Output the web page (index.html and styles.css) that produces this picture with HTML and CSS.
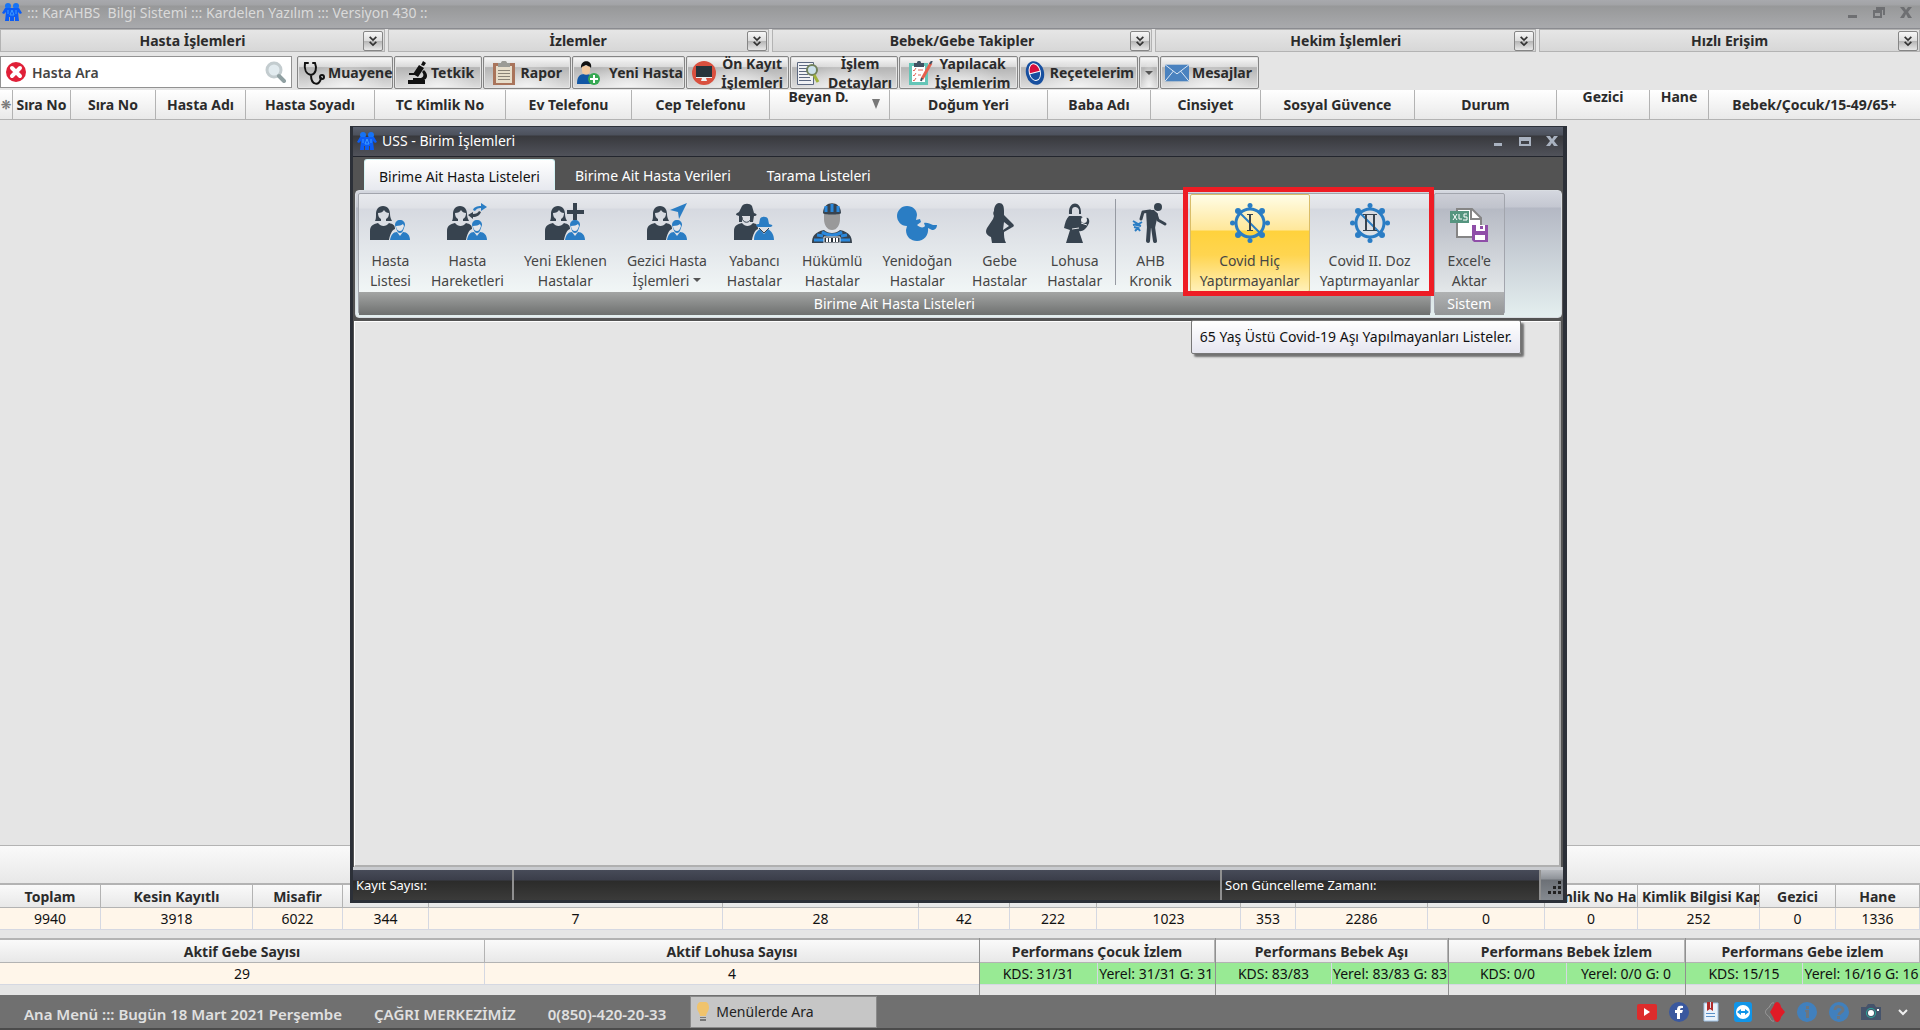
FILE: index.html
```html
<!DOCTYPE html>
<html lang="tr">
<head>
<meta charset="UTF-8">
<meta name="viewport" content="width=device-width, initial-scale=1.0">
<title>KarAHBS Bilgi Sistemi</title>
<link rel="stylesheet" href="styles.css">
</head>
<body>

<!-- shared icon shapes -->
<svg class="sprite" aria-hidden="true">
<symbol id="app" viewBox="0 0 20 18">
<g fill="#1673f5"><circle cx="6" cy="3" r="3"/><circle cx="14" cy="3" r="3"/></g>
<path fill="#0b5cf5" d="M3 5h14l3 5-2 1-2-2 1 9h-4v-4h-1v4H8v-4H7v4H3l1-9-2 2-2-1z"/>
<path fill="none" stroke="#3f9bff" d="M10 7l-2 5h4zM6 7v4M14 7v4"/>
</symbol>
<symbol id="woman" viewBox="0 0 40 40">
<path fill="#37434f" d="M13 3c-5 0-7 4-7 8 0 3 0 5-1 7h6v-2c-2-1-3-3-3-6 3 0 5-1 6-3 1 2 3 3 5 3 0 3-1 5-3 6v2h6c-1-2-2-4-2-7 0-4-2-8-7-8z"/>
<path fill="#37434f" d="M0 37v-9c0-5 3-7 8-8 3 4 8 4 11 0 4 1 6 2 6 6-3 1-5 5-6 11z"/>
</symbol>
<symbol id="boy" viewBox="0 0 40 40">
<path fill="#2a7dc4" d="M30 17c-3 0-5 2-5 5l1 3c1 3 2 5 4 5s3-2 4-5l1-3c0-3-2-5-5-5z"/>
<path fill="#e4e6ea" d="M26 23c3 0 6-1 7-2l1 2c-1 3-2 5-4 5s-4-2-4-5z"/>
<path fill="#2a7dc4" d="M20 37c1-5 3-8 7-8l3 4 3-4c4 0 7 3 7 8z"/>
</symbol>
<symbol id="virus" viewBox="0 0 40 40">
<g stroke="#2a7dc4" stroke-width="3" fill="none"><circle cx="20" cy="20" r="14"/><path stroke-width="2" d="M10 10l20 20M20 2v5M20 33v5M2 20h5M33 20h5M7 7l4 4M29 29l4 4M33 7l-4 4M7 33l4-4"/></g>
<g fill="#2a7dc4"><circle cx="20" cy="2.500" r="2.500"/><circle cx="20" cy="37.500" r="2.500"/><circle cx="2.500" cy="20" r="2.500"/><circle cx="37.500" cy="20" r="2.500"/><circle cx="8" cy="8" r="3"/><circle cx="32" cy="8" r="3"/><circle cx="8" cy="32" r="3"/><circle cx="32" cy="32" r="3"/></g>
</symbol>
<symbol id="chevrons" viewBox="0 0 12 14">
<path fill="none" stroke="#333" stroke-width="2" d="M2 2l4 4 4-4M2 8l4 4 4-4"/>
</symbol>
</svg>

<header class="titlebar">
<svg class="app-icon"><use href="#app"/></svg>
<h1>::: KarAHBS&nbsp; Bilgi Sistemi ::: Kardelen Yazılım ::: Versiyon 430 ::</h1>
<div class="win-buttons">
<button type="button" aria-label="Küçült"><svg viewBox="0 0 12 12"><path d="M2 9h9v3H2z"/></svg></button>
<button type="button" aria-label="Geri yükle"><svg viewBox="0 0 12 12"><path fill-rule="evenodd" d="M3 1h9v8h-2V4H3zM0 4h9v8H0zm2 3v3h5V7z"/></svg></button>
<button type="button" aria-label="Kapat"><svg viewBox="0 0 12 12"><path d="M0 1h4l2 3 2-3h4L8 6l4 6H8L6 8l-2 4H0l4-6z"/></svg></button>
</div>
</header>

<nav class="menus">
<div class="menu"><span>Hasta İşlemleri</span><button type="button" aria-label="Hasta İşlemleri aç"><svg><use href="#chevrons"/></svg></button></div>
<div class="menu"><span>İzlemler</span><button type="button" aria-label="İzlemler aç"><svg><use href="#chevrons"/></svg></button></div>
<div class="menu"><span>Bebek/Gebe Takipler</span><button type="button" aria-label="Bebek/Gebe Takipler aç"><svg><use href="#chevrons"/></svg></button></div>
<div class="menu"><span>Hekim İşlemleri</span><button type="button" aria-label="Hekim İşlemleri aç"><svg><use href="#chevrons"/></svg></button></div>
<div class="menu"><span>Hızlı Erişim</span><button type="button" aria-label="Hızlı Erişim aç"><svg><use href="#chevrons"/></svg></button></div>
</nav>

<div class="toolbar">
<div class="search">
<svg class="clear-icon" viewBox="0 0 22 22"><circle cx="11" cy="11" r="10" fill="#e02038"/><path d="M7 7l8 8M15 7l-8 8" stroke="#fff" stroke-width="4" stroke-linecap="round"/></svg>
<input type="text" placeholder="Hasta Ara" aria-label="Hasta Ara">
<svg class="find-icon" viewBox="0 0 22 22"><circle cx="9" cy="9" r="7" fill="#e2ebef" stroke="#c3cccf" stroke-width="3"/><path d="M14 15l5 5" stroke="#90a0a2" stroke-width="4" stroke-linecap="round"/></svg>
</div>

<button type="button" class="tool muayene">
<svg viewBox="0 0 24 24"><path fill="none" stroke="#111" stroke-width="2" stroke-linecap="round" d="M6 2H3c-1 6 1 11 6 12 5-1 6-7 4-12h-2M9 14c0 11 9 11 10 3"/><circle cx="20" cy="16" r="2" fill="none" stroke="#111" stroke-width="2"/></svg>
<span>Muayene</span></button>
<button type="button" class="tool tetkik">
<svg viewBox="0 0 24 24"><path fill="#111" d="M18 0l3 2-2 3-3-1zM14 4l5 3-6 9-5-3zM4 12h9v2H4zM3 19h5v-2h8c3-1 3-4 1-6l2-2c5 5 3 9 0 10h1v4H3z"/></svg>
<span>Tetkik</span></button>
<button type="button" class="tool rapor">
<svg viewBox="0 0 24 24"><path fill="#a9745b" d="M1 2h22v22H1z"/><path fill="#e7decb" d="M4 5h16v17H4z"/><path fill="#9b9b96" d="M6 2h3c0-3 6-3 6 0h3v4H6z"/><path stroke="#8a8378" d="M6 9.500h12M6 12.500h12M6 15.500h12M6 18.500h12"/></svg>
<span>Rapor</span></button>
<button type="button" class="tool yeni">
<svg viewBox="0 0 24 24"><path fill="#1257a5" d="M0 23c0-7 2-10 8-10s10 3 10 10z"/><path fill="#f1c9a0" d="M5 5h8v5c0 5-8 5-8 0z"/><path fill="#111" d="M4 7c-1-9 12-9 10 0-1-2-4-2-5-3-1 1-4 1-5 3z"/><circle cx="17" cy="18" r="6" fill="#35a852"/><path stroke="#fff" stroke-width="2" d="M17 14v8M13 18h8"/></svg>
<span>Yeni Hasta</span></button>
<button type="button" class="tool onkayit">
<svg viewBox="0 0 24 24"><circle cx="12" cy="12" r="12" fill="#d9503f"/><path fill="#26343c" d="M4 5h16v12H4z"/><path fill="#eef1f2" d="M4 16h16v1H4zM10 17h4l1 3H9z"/></svg>
<span>Ön Kayıt<br>İşlemleri</span></button>
<button type="button" class="tool islem">
<svg viewBox="0 0 24 24"><path fill="#f0f1f4" stroke="#5c6880" d="M1.500 1.500h16v22h-16z"/><path stroke="#5c6880" d="M3 4.500h10M3 7.500h8M3 10.500h8M3 13.500h9M3 16.500h11M3 19.500h12"/><circle cx="16" cy="9" r="5" fill="#cbe0ea" stroke="#70805a" stroke-width="2"/><path stroke="#a0b33b" stroke-width="3" d="M18 14l4 7"/></svg>
<span>İşlem<br>Detayları</span></button>
<button type="button" class="tool yapilacak">
<svg viewBox="0 0 24 24"><path fill="#64c5b7" d="M0 2h19v22H0z"/><path fill="#fff" d="M3 5h13v16H3z"/><path fill="#405162" d="M5 2h3c0-3 4-3 4 0h3v4H5z"/><path fill="none" stroke="#e0685a" stroke-width="1" d="M4 9l1 1 2-3M4 14l1 1 2-3M4 19l1 1 2-3M9 9h5M9 14h3"/><path stroke="#e7604d" stroke-width="3" d="M22 2l-9 16"/><path stroke="#405162" stroke-width="2" d="M23 0l-2 3M13 17l-1 3"/></svg>
<span>Yapılacak<br>İşlemlerim</span></button>
<button type="button" class="tool recete">
<svg viewBox="0 0 24 24"><g transform="rotate(-14 12 12)"><ellipse cx="12" cy="12" rx="9" ry="12" fill="#174f9f"/><ellipse cx="12" cy="11" rx="6" ry="9" fill="#fff"/><path fill="#d80e3c" d="M7 11a5 8 0 0 1 10 0z"/><path fill="#174f9f" d="M7 12a5 7 0 0 0 10 0z"/></g></svg>
<span>Reçetelerim</span></button>
<button type="button" class="tool drop" aria-label="Reçetelerim menüsü"><i class="caret"></i></button>
<button type="button" class="tool mesaj">
<svg viewBox="0 0 26 18"><path fill="#4a82bf" d="M0 0h26v18H0z"/><path fill="none" stroke="#e8f0f8" d="M0 0l13 10L26 0M0 18l9-11M26 18L17 7"/></svg>
<span>Mesajlar</span></button>
</div>

<main class="workspace">
<table class="patients">
<colgroup><col><col><col><col><col><col><col><col><col><col><col><col><col><col><col><col><col></colgroup>
<thead>
<tr>
<th class="star">❊</th>
<th>Sıra No</th>
<th>Sıra No</th>
<th>Hasta Adı</th>
<th>Hasta Soyadı</th>
<th>TC Kimlik No</th>
<th>Ev Telefonu</th>
<th>Cep Telefonu</th>
<th class="top sorted">Beyan D. <i class="sort-mark"></i></th>
<th>Doğum Yeri</th>
<th>Baba Adı</th>
<th>Cinsiyet</th>
<th>Sosyal Güvence</th>
<th>Durum</th>
<th class="top">Gezici</th>
<th class="top">Hane</th>
<th>Bebek/Çocuk/15-49/65+</th>
</tr>
</thead>
</table>
</main>

<div class="strip"></div>
<table class="summary totals">
<colgroup><col><col><col><col><col><col><col><col><col><col><col><col><col><col><col><col></colgroup>
<thead>
<tr><th>Toplam</th><th>Kesin Kayıtlı</th><th>Misafir</th><th></th><th></th><th></th><th></th><th></th><th></th><th></th><th></th><th></th><th>Kimlik No Ha</th><th class="cut">Kimlik Bilgisi Kapa</th><th>Gezici</th><th>Hane</th></tr>
</thead>
<tbody>
<tr><td>9940</td><td>3918</td><td>6022</td><td>344</td><td>7</td><td>28</td><td>42</td><td>222</td><td>1023</td><td>353</td><td>2286</td><td>0</td><td>0</td><td>252</td><td>0</td><td>1336</td></tr>
</tbody>
</table>

<div class="counts">
<table class="summary active">
<colgroup><col><col></colgroup>
<thead><tr><th>Aktif Gebe Sayısı</th><th>Aktif Lohusa Sayısı</th></tr></thead>
<tbody><tr><td>29</td><td>4</td></tr></tbody>
</table>
<table class="summary perf">
<thead><tr><th colspan="2">Performans Çocuk İzlem</th></tr></thead>
<tbody><tr><td>KDS: 31/31</td><td>Yerel: 31/31 G: 31</td></tr></tbody>
</table>
<table class="summary perf">
<thead><tr><th colspan="2">Performans Bebek Aşı</th></tr></thead>
<tbody><tr><td>KDS: 83/83</td><td>Yerel: 83/83 G: 83</td></tr></tbody>
</table>
<table class="summary perf">
<thead><tr><th colspan="2">Performans Bebek İzlem</th></tr></thead>
<tbody><tr><td>KDS: 0/0</td><td>Yerel: 0/0 G: 0</td></tr></tbody>
</table>
<table class="summary perf">
<thead><tr><th colspan="2">Performans Gebe izlem</th></tr></thead>
<tbody><tr><td>KDS: 15/15</td><td>Yerel: 16/16 G: 16</td></tr></tbody>
</table>
</div>

<footer class="footer">
<span>Ana Menü ::: Bugün 18 Mart 2021 Perşembe</span>
<span>ÇAĞRI MERKEZİMİZ</span>
<span>0(850)-420-20-33</span>
<div class="menu-search">
<svg viewBox="0 0 12 20"><path fill="#f0c36c" d="M3 0h6c3 1 3 5 3 6 0 3-3 5-3 8H3c0-3-3-5-3-8 0-1 0-5 3-6z"/><path fill="#777" d="M3 15h6v1H3zM3 17h6v2H3z"/></svg>
<input type="text" placeholder="Menülerde Ara" aria-label="Menülerde Ara">
</div>
<div class="links">
<a href="#" aria-label="YouTube"><svg viewBox="0 0 20 20"><rect y="2" width="20" height="16" rx="2" fill="#dd2c2c"/><path fill="#fff" d="M7 6l6 4-6 4z"/></svg></a>
<a href="#" aria-label="Facebook"><svg viewBox="0 0 20 20"><circle cx="10" cy="10" r="10" fill="#3a589e"/><path fill="#fff" d="M8 17v-6H6V8h2c0-4 2-5 6-4v2c-2 0-3 0-3 2h3l-1 3h-2v6z"/></svg></a>
<a href="#" aria-label="Kılavuz"><svg viewBox="0 0 20 20"><path fill="#eaf2fb" stroke="#9fc2e4" d="M3 1h14v18H3z"/><path fill="#b02b2b" d="M6 0h6v9L9 7l-3 2z"/><path stroke="#5a90c8" d="M5 11.500h9M5 14.500h9"/><path stroke="#dde" d="M9.500 0v6"/></svg></a>
<a href="#" aria-label="Uzak destek"><svg viewBox="0 0 20 20"><rect x="1" y="0" width="18" height="20" rx="3" fill="#1195e8"/><circle cx="10" cy="10" r="7" fill="#fff"/><path fill="#1195e8" d="M4 10l4-3v2h4V7l4 3-4 3v-2H8v2z"/></svg></a>
<a href="#" aria-label="Kardelen"><svg viewBox="0 0 20 20"><path fill="none" stroke="#9a9a9a" d="M9 1C5 0 6 5 2 7c-2 2-2 4 0 6 4 2 3 7 7 6"/><path fill="#e01a26" d="M12 0c2 0 4 3 4 5l4 5-4 5c0 2-2 5-4 5s-3-3-4-5l-3-5 3-5c1-2 2-5 4-5z"/></svg></a>
<a href="#" aria-label="Bilgi"><svg viewBox="0 0 20 20"><circle cx="10" cy="10" r="10" fill="#4180bd"/><path fill="#6c7680" d="M9 4h3v3H9zM8 8h4v8H9v-6H8z"/></svg></a>
<a href="#" aria-label="Yardım"><svg viewBox="0 0 20 20"><circle cx="10" cy="10" r="10" fill="#4180bd"/><path fill="none" stroke="#6c7680" stroke-width="3" d="M6 8c0-5 8-4 8 0 0 2-4 2-4 5"/><path fill="#6c7680" d="M8 14h3v3H8z"/></svg></a>
<a href="#" aria-label="Ekran görüntüsü"><svg viewBox="0 0 20 20"><path fill="#45536b" d="M0 5h5l2-3h6l2 3h5v13H0z"/><circle cx="10" cy="11" r="5" fill="#2ba99b"/><circle cx="10" cy="11" r="4" fill="#45536b"/><circle cx="10" cy="11" r="3" fill="#fff"/><path fill="#fff" d="M16 7h2v2h-2z"/></svg></a>
<a href="#" aria-label="Daha fazla"><svg viewBox="0 0 20 20"><path fill="none" stroke="#f0f0f0" stroke-width="2" d="M6 8l4 4 4-4"/></svg></a>
</div>
</footer>

<section class="dialog" role="dialog" aria-label="USS - Birim İşlemleri">
<div class="dialog-title">
<svg class="app-icon"><use href="#app"/></svg>
<h2>USS - Birim İşlemleri</h2>
<div class="win-buttons">
<button type="button" aria-label="Küçült"><svg viewBox="0 0 12 12"><path d="M2 8h8v3H2z"/></svg></button>
<button type="button" aria-label="Büyüt"><svg viewBox="0 0 12 12"><path fill-rule="evenodd" d="M0 2h12v9H0zm2 4v3h8V6z"/></svg></button>
<button type="button" aria-label="Kapat"><svg viewBox="0 0 12 12"><path d="M0 1h4l2 3 2-3h4L8 6l4 5H8L6 8l-2 3H0l4-5z"/></svg></button>
</div>
</div>

<div class="tabs">
<button type="button" class="tab selected">Birime Ait Hasta Listeleri</button>
<button type="button" class="tab">Birime Ait Hasta Verileri</button>
<button type="button" class="tab">Tarama Listeleri</button>
</div>

<div class="ribbon">
<div class="group lists">
<div class="items">
<button type="button" class="item"><svg viewBox="0 0 40 40"><use href="#woman"/><use href="#boy"/></svg><span>Hasta<br>Listesi</span></button>
<button type="button" class="item"><svg viewBox="0 0 40 40"><use href="#woman"/><use href="#boy"/><path fill="#2a7dc4" d="M26 7c1-3 4-4 8-4V0l6 4-6 4V5c-3 0-5 1-6 3z"/><path fill="#37434f" d="M34 9c-1 3-4 5-8 5v2l-5-4 5-3v2c3 0 5-1 6-3z"/></svg><span>Hasta<br>Hareketleri</span></button>
<button type="button" class="item"><svg viewBox="0 0 40 40"><use href="#woman"/><use href="#boy"/><path fill="#37434f" d="M28 0h4v7h7v4h-7v6h-4v-6h-6V7h6z"/></svg><span>Yeni Eklenen<br>Hastalar</span></button>
<button type="button" class="item"><svg viewBox="0 0 40 40"><use href="#woman"/><use href="#boy"/><path fill="#2a7dc4" d="M40 0L23 7l8 2 1 7z"/></svg><span>Gezici Hasta<br>İşlemleri<i class="caret"></i></span></button>
<button type="button" class="item"><svg viewBox="0 0 40 40"><path fill="#37434f" d="M8 3c2-3 8-3 10 0l2 7c4 1 3 3 0 3l-1 6h-3v-6H8v6H5v-6c-4-1-4-2 0-4zM0 37v-9c0-5 3-7 8-8 3 4 8 4 11 0 4 1 5 2 5 6-3 1-5 5-6 11z"/><path fill="#2a7dc4" d="M26 16c1-3 7-3 8 0l1 5c5 1 4 3 0 3H24c-3-1-2-3 1-3zM20 37c0-6 3-9 6-11l4 5 4-5c3 2 6 5 6 11z"/><path fill="none" stroke="#37434f" d="M8 14c0 7 9 7 9 0M25 25l5 5 5-5"/></svg><span>Yabancı<br>Hastalar</span></button>
<button type="button" class="item"><svg viewBox="0 0 40 40"><path fill="#99999a" d="M12 11h16v5c0 6-3 11-8 11s-8-5-8-11z"/><path fill="#37434f" d="M11 10c0-13 18-13 18 0 0 2-18 2-18 0z"/><path stroke="#2a88dc" stroke-width="3" d="M14 3v6M20 1v8M26 3v6"/><path fill="#37434f" d="M0 40c0-7 3-11 12-13 4 4 12 4 16 0 9 2 12 6 12 13z"/><path fill="none" stroke="#2a88dc" stroke-width="3" d="M10 29c6 4 14 4 20 0M2 37h10M28 37h10M5 32l6 1M35 32l-6 1"/><path fill="#27313b" stroke="#e6e8ec" d="M12 34h16v6H12z"/><path stroke="#fff" stroke-width="2" d="M15 35v4M18 35v4M22 35v4M25 35v4"/></svg><span>Hükümlü<br>Hastalar</span></button>
<button type="button" class="item"><svg viewBox="0 0 40 40"><path fill="#2a7dc4" d="M10 3c6 0 10 4 10 9l-1 5 4-1 1 3-4 3c3 3 7 3 8 1l-1-3c3-1 6 1 9 2h4c0 3-2 5-5 5l-4-2c1 7-4 13-11 13-6 0-11-4-11-11l1-4c-6 0-10-5-10-10S4 3 10 3z"/></svg><span>Yenidoğan<br>Hastalar</span></button>
<button type="button" class="item"><svg viewBox="0 0 40 40"><path fill="#37434f" fill-rule="evenodd" d="M19 0c4 0 5 3 5 8v4l9 9c2 2 0 3-2 4l-7 4c0 4 0 7 2 11H12l-1-6c-5-2-6-5-4-9l6-9 1-3c-1-2-1-4 0-5 0-4 2-8 5-8zm5 19l-1 8 6-4z"/></svg><span>Gebe<br>Hastalar</span></button>
<button type="button" class="item"><svg viewBox="0 0 40 40"><path fill="#37434f" d="M14 11c-1-14 13-14 12 0h-2V7c-1-4-7-4-7 0v4zM14 13h12l4 3c3-4 6 2 3 6-2 4-6 7-9 6l4 12H11l4-13-6-2c1-5 2-9 5-12z"/><circle cx="29" cy="17" r="3" fill="#e5e7eb"/><path fill="none" stroke="#e5e7eb" d="M17 26l7-1M26 20l6 2"/></svg><span>Lohusa<br>Hastalar</span></button>
<span class="divider"></span>
<button type="button" class="item"><svg viewBox="0 0 40 40"><circle cx="28" cy="4" r="4" fill="#37434f"/><path fill="none" stroke="#37434f" stroke-width="3" stroke-linecap="round" stroke-linejoin="round" d="M20 8l-7 1-2 7M26 11l2 6 7 4"/><path fill="none" stroke="#37434f" stroke-width="4" stroke-linecap="round" d="M19 24l-1 14M23 24l2 14"/><path fill="#37434f" d="M16 7h8l4 4-3 14h-8z"/><path fill="none" stroke="#2a7dc4" stroke-width="2" d="M3 18l5 3-5 1M12 19l-5 3 4 1M5 28l3-3-4-1M10 28l-2-3"/></svg><span>AHB<br>Kronik</span></button>
<div class="marked">
<button type="button" class="item hot"><svg viewBox="0 0 40 40"><use href="#virus"/><path fill="#37434f" d="M17 11h6v1h-2v15h2v1h-6v-1h2V12h-2z"/></svg><span>Covid Hiç<br>Yaptırmayanlar</span></button>
<button type="button" class="item"><svg viewBox="0 0 40 40"><use href="#virus"/><path fill="#37434f" d="M13 11h14v1H13zM13 27h14v1H13zM15 12h2v15h-2zM23 12h2v15h-2z"/></svg><span>Covid II. Doz<br>Yaptırmayanlar</span></button>
</div>
</div>
<div class="group-name">Birime Ait Hasta Listeleri</div>
</div>
<div class="group system">
<div class="items">
<button type="button" class="item"><svg viewBox="0 0 40 40"><path fill="#fff" stroke="#858585" stroke-width="2" d="M8 6h15l9 9v19H8z"/><path fill="none" stroke="#858585" stroke-width="2" d="M22 6v10h10"/><path fill="#55957f" d="M1 8h19v12H1z"/><path fill="none" stroke="#fff" stroke-width="1" d="M4 11l4 6M8 11l-4 6M10 11v5h3M18 11h-3v3h3v3h-4"/><path fill="#8f4ea8" d="M23 22h16v17H25l-2-2z"/><path fill="#fff" d="M27 22h9v6h-9zM26 32h10v5H26z"/><path fill="#8f4ea8" d="M31 23h3v3h-3z"/></svg><span>Excel'e<br>Aktar</span></button>
</div>
<div class="group-name">Sistem</div>
</div>
<div class="tooltip">65 Yaş Üstü Covid-19 Aşı Yapılmayanları Listeler.</div>
</div>

<div class="dialog-body"></div>

<div class="statusbar">
<div class="cell count">Kayıt Sayısı:</div>
<div class="cell empty"></div>
<div class="cell updated">Son Güncelleme Zamanı:</div>
<div class="grip"><svg viewBox="0 0 14 14"><path d="M10 0h3v3h-3zM5 5h3v3H5zM10 5h3v3h-3zM0 10h3v3H0zM5 10h3v3H5zM10 10h3v3h-3z"/></svg></div>
</div>
</section>

</body>
</html>
```
FILE: styles.css
```css
* {
box-sizing: border-box;
}

body {
margin: 0;
min-height: 100vh;
display: flex;
flex-direction: column;
position: relative;
background-color: #e5e5e5;
color: #2b2b2b;
font-family: "Noto Sans", "Open Sans", sans-serif;
font-size: 14px;
}

button, input {
font: inherit;
color: inherit;
margin: 0;
padding: 0;
border: none;
background: none;
}

h1, h2 {
margin: 0;
font-weight: normal;
}

.sprite {
position: absolute;
width: 0;
height: 0;
}

.app-icon {
width: 20px;
height: 18px;
}

/* main window title */
.titlebar {
height: 29px;
padding: 0 8px 4px 2px;
display: flex;
align-items: center;
gap: 5px;
background: linear-gradient(#a8a9ad, #a2a3a6 5px, #979899 6px, #a8a9ac 27px);
border-bottom: 1px solid #8a8b90;
}

.titlebar h1 {
font-size: 14px;
color: #dadada;
}

.win-buttons {
margin-left: auto;
display: flex;
gap: 15px;
}

.win-buttons button {
width: 12px;
height: 12px;
display: flex;
}

.win-buttons svg {
width: 12px;
height: 12px;
fill: #6e6f72;
}

/* menu headings */
.menus {
display: grid;
grid-template-columns: 385fr 381fr 381fr 381fr 381fr;
gap: 3px;
}

.menu {
height: 23px;
display: flex;
align-items: center;
padding: 0 1px 0 21px;
font-weight: bold;
background: linear-gradient(#e6e6e6, #d7d7d7);
border: 1px solid #b3b3b3;
}

.menu span {
flex: 1;
text-align: center;
}

.menu button {
width: 20px;
height: 20px;
display: flex;
align-items: center;
justify-content: center;
border: 1px solid #858585;
border-radius: 2px;
background: linear-gradient(#f7f7f7, #dcdcdc 50%, #b5b5b5 51%, #e8e8e8);
}

.menu button svg {
width: 10px;
height: 12px;
}

/* search and buttons */
.toolbar {
height: 38px;
padding-top: 4px;
display: flex;
gap: 1px;
}

.search {
width: 292px;
height: 32px;
margin: 0 4px 0 0;
padding: 0 4px;
display: flex;
align-items: center;
gap: 5px;
background-color: #fff;
border: 1px solid #929292;
}

.search input {
flex: 1;
min-width: 0;
outline: none;
}

.search input::placeholder {
color: #444;
opacity: 1;
font-weight: 600;
}

.clear-icon, .find-icon {
width: 22px;
height: 22px;
}

.tool {
height: 33px;
padding: 0 1px 0 4px;
display: flex;
align-items: center;
justify-content: space-between;
gap: 2px;
font-weight: bold;
line-height: 19px;
text-align: center;
border: 1px solid #858585;
border-radius: 2px;
background: radial-gradient(ellipse at 50% 100%, #ffffffb0, #ffffff00 60%), linear-gradient(#fafafa, #d8d8d8 33%, #b4b4b4 34%, #dedede);
box-shadow: inset 0 0 0 1px #e4e4e4;
}

.tool svg {
width: 24px;
height: 24px;
flex: none;
}

.tool .caret {
margin: auto;
}

.muayene { width: 96px; }
.tetkik { width: 88px; padding: 0 9px 0 10px; }
.rapor { width: 88px; padding: 0 8px; }
.yeni { width: 113px; }
.onkayit { width: 103px; padding: 0 5px; }
.islem { width: 108px; padding: 0 5px; }
.yapilacak { width: 119px; padding: 0 9px; }
.recete { width: 119px; padding: 0 3px; }
.drop { width: 20px; padding: 0; }
.mesaj { width: 99px; padding: 0 6px 0 4px; }

.caret {
display: inline-block;
border: 4px solid transparent;
border-top-color: #555;
border-bottom: none;
}

/* patient grid */
.workspace {
flex: 1;
}

table {
width: 100%;
border-collapse: separate;
border-spacing: 0;
table-layout: fixed;
}

th, td {
padding: 0;
white-space: nowrap;
overflow: hidden;
}

.patients th {
height: 30px;
overflow: visible;
border-right: 1px solid #b3b3b3;
border-bottom: 1px solid #b3b3b3;
background: linear-gradient(#fff, #e9e9e9);
}

.patients th:last-child {
border-right: none;
}

.patients .star {
color: #777;
font-size: 12px;
}

.patients .top {
vertical-align: top;
line-height: 14px;
}

.patients .sorted {
position: relative;
padding-right: 22px;
}

.sort-mark {
position: absolute;
right: 9px;
top: 9px;
border: 4px solid transparent;
border-top: 10px solid #777;
border-bottom: none;
}

.patients col:nth-child(1) { width: 13px; }
.patients col:nth-child(2) { width: 58px; }
.patients col:nth-child(3) { width: 85px; }
.patients col:nth-child(4) { width: 90px; }
.patients col:nth-child(5) { width: 129px; }
.patients col:nth-child(6) { width: 131px; }
.patients col:nth-child(7) { width: 126px; }
.patients col:nth-child(8) { width: 138px; }
.patients col:nth-child(9) { width: 120px; }
.patients col:nth-child(10) { width: 158px; }
.patients col:nth-child(11) { width: 103px; }
.patients col:nth-child(12) { width: 110px; }
.patients col:nth-child(13) { width: 154px; }
.patients col:nth-child(14) { width: 142px; }
.patients col:nth-child(15) { width: 93px; }
.patients col:nth-child(16) { width: 59px; }
.patients col:nth-child(17) { width: 211px; }

/* totals under the grid */
.strip {
height: 38px;
border-top: 1px solid #b3b3b3;
background: linear-gradient(#fafafa, #e8e8e8);
}

.summary th {
height: 25px;
border-top: 2px solid #b3b3b3;
border-right: 1px solid #b3b3b3;
border-bottom: 1px solid #b3b3b3;
background: linear-gradient(#fafafa, #e8e8e8);
}

.summary td {
height: 22px;
text-align: center;
color: #111;
background-color: #fff6ea;
border-right: 1px solid #d5d8e2;
border-bottom: 1px solid #d5d8e2;
}

.summary .cut {
text-align: left;
padding-left: 4px;
}

.totals col:nth-child(1) { width: 101px; }
.totals col:nth-child(2) { width: 152px; }
.totals col:nth-child(3) { width: 90px; }
.totals col:nth-child(4) { width: 86px; }
.totals col:nth-child(5) { width: 294px; }
.totals col:nth-child(6) { width: 196px; }
.totals col:nth-child(7) { width: 91px; }
.totals col:nth-child(8) { width: 87px; }
.totals col:nth-child(9) { width: 144px; }
.totals col:nth-child(10) { width: 55px; }
.totals col:nth-child(11) { width: 132px; }
.totals col:nth-child(12) { width: 117px; }
.totals col:nth-child(13) { width: 93px; }
.totals col:nth-child(14) { width: 122px; }
.totals col:nth-child(15) { width: 76px; }
.totals col:nth-child(16) { width: 84px; }

.counts {
height: 57px;
margin-top: 8px;
display: grid;
grid-template-columns: 979fr 236fr 233fr 237fr 235fr;
align-items: start;
}

.active col:nth-child(1) { width: 485px; }
.active col:nth-child(2) { width: 494px; }

.active td:last-child, .active th:last-child {
border-right: none;
}

.perf {
height: 57px;
border-left: 1px solid #909090;
}

.perf::after {
content: "";
display: table-row;
height: 10px;
}

.perf td {
background-color: #98ea94;
}

.perf td:last-child {
border-right: none;
}

/* bottom bar */
.footer {
height: 35px;
padding: 0 7px 0 24px;
display: flex;
align-items: center;
gap: 32px;
font-weight: 600;
color: #e0e0e0;
background-color: #707070;
border-bottom: 2px solid #4b4b4b;
}

.footer > span {
padding-top: 4px;
font-size: 15px;
}

.menu-search {
width: 187px;
height: 32px;
margin-left: -8px;
padding-left: 6px;
display: flex;
align-items: center;
gap: 7px;
background-color: #c6c6c6;
border: 1px solid #8a8a8a;
font-weight: normal;
color: #222;
}

.menu-search svg {
width: 12px;
height: 20px;
flex: none;
}

.menu-search input {
flex: 1;
min-width: 0;
outline: none;
}

.menu-search input::placeholder {
color: #222;
opacity: 1;
}

.links {
margin-left: auto;
display: flex;
gap: 12px;
}

.links a, .links svg {
display: block;
width: 20px;
height: 20px;
}

/* USS window, floats over the main one */
.dialog {
position: absolute;
top: 126px;
left: 350px;
right: 353px;
bottom: 127px;
display: flex;
flex-direction: column;
background-color: #535353;
border: 1px solid #2c3038;
border-width: 1px 4px 3px 3px;
}

.dialog-title {
height: 30px;
padding: 0 5px 2px 4px;
display: flex;
align-items: center;
gap: 5px;
background: linear-gradient(#5a606e, #4c515c 8px, #38393d 9px, #50525a);
border-bottom: 1px solid #23262e;
}

.dialog-title h2 {
font-size: 14px;
color: #fff;
}

.dialog-title .win-buttons svg {
fill: #a9b2c0;
}

.tabs {
height: 33px;
padding: 2px 0 0 11px;
display: flex;
}

.tab {
height: 32px;
padding: 0 16px 0 20px;
line-height: 34px;
color: #fff;
}

.tab.selected {
padding: 0 14px;
color: #111;
background: linear-gradient(#fff, #e6e8ee);
border: 1px solid #d5f3f5;
border-bottom: none;
border-radius: 3px 3px 0 0;
}

.ribbon {
position: relative;
height: 128px;
margin: 0 1px 0 2px;
padding: 2px 2px 3px;
display: flex;
gap: 3px;
background: linear-gradient(#d4d7df, #c4c7d1 16px, #b4b8c4 17px, #e4efef);
border: 1px solid #d9dde2;
border-radius: 4px;
}

.group {
display: flex;
flex-direction: column;
border: 1px solid #a2a5ad;
border-radius: 2px;
background: linear-gradient(#e8eaee, #dfe1e6 14px, #d6d9e0 15px, #f1f6f6 98px);
}

.group.system {
background: linear-gradient(#ccced6, #c0c3cc 14px, #b6bac4 15px, #e3e7e9 98px);
}

.items {
height: 98px;
padding-left: 1px;
display: flex;
}

.system .items {
padding: 0 3px;
}

.item {
height: 98px;
padding: 9px 10px 0;
display: flex;
flex-direction: column;
align-items: center;
gap: 8px;
line-height: 20px;
color: #454545;
white-space: nowrap;
}

.item svg {
width: 40px;
height: 40px;
flex: none;
}

.item .caret {
margin: 0 0 4px 4px;
}

.divider {
width: 1px;
margin: 5px 3px 7px;
background-color: #969aa2;
}

.marked {
position: relative;
display: flex;
margin-left: 8px;
}

.marked::after {
content: "";
position: absolute;
inset: -7px -4px -4px -7px;
border: 5px solid #ee1c24;
pointer-events: none;
}

.marked .item {
border: 1px solid transparent;
padding: 8px 9px 0;
}

.marked .hot {
border-color: #d9bd68;
border-radius: 2px;
background: linear-gradient(#fffde6, #ffe79a 35px, #ffd23c 36px, #ffd550 60px, #fff0b8);
}

.group-name {
flex: 1;
line-height: 23px;
text-align: center;
color: #fff;
background: linear-gradient(#a3a5a4, #6e706f);
}

.system .group-name {
background: linear-gradient(#b0b2b3, #939596);
}

.tooltip {
position: absolute;
top: 129px;
right: 40px;
height: 34px;
padding: 0 8px;
line-height: 32px;
white-space: nowrap;
color: #111;
background: linear-gradient(#fff, #e6e6f0);
border: 1px solid #777;
border-radius: 2px;
box-shadow: 3px 3px 2px #00000080;
}

.dialog-body {
flex: 1;
margin: 3px 2px 0 1px;
background-color: #e5e5e5;
border: 1px solid #fff;
border-right: 2px solid #aaa;
border-bottom: 2px solid #b0b0b0;
}

.statusbar {
height: 33px;
display: flex;
border-top: 3px solid #c9cbcf;
color: #fff;
font-size: 13px;
background: linear-gradient(#474b58, #3b3e4a 10px, #2b2b2a 11px, #3b3b3a);
}

.statusbar .cell {
padding-left: 3px;
line-height: 30px;
border-right: 2px solid #909090;
}

.count {
width: 161px;
}

.empty {
flex: 1;
}

.updated {
width: 319px;
}

.grip {
width: 22px;
padding: 11px 0 0 7px;
background: linear-gradient(#b5b8bd, #8e9298 9px, #6c7076 10px, #858a90);
}

.grip svg {
display: block;
width: 14px;
height: 14px;
fill: #222;
}
```
